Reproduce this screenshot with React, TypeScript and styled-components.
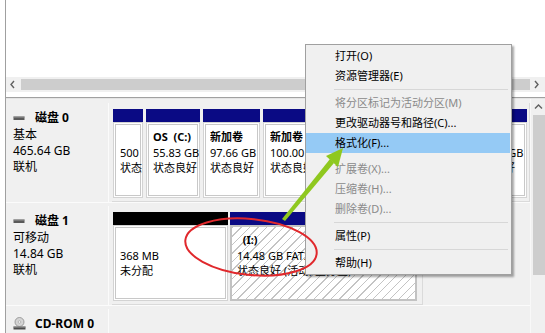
import styled, { createGlobalStyle } from "styled-components"

const GlobalStyle = createGlobalStyle`
  html, body {
    margin: 0;
    padding: 0;
    background: #fff;
  }
  body {
    font-family: "Noto Sans", "Noto Sans CJK SC", sans-serif;
    color: #000;
  }
`

const Page = styled.div`
  position: relative;
  width: 545px;
  height: 333px;
  overflow: hidden;
  padding-left: 5px;
  box-sizing: border-box;
  background: #fff;
`

const Frame = styled.div`
  height: 100%;
  border-left: 1px solid #a0a0a0;
  display: flex;
  flex-direction: column;
`

const TopPane = styled.div`
  height: 77px;
  flex-shrink: 0;
  background: #fff;
`

const HScroll = styled.div`
  height: 15px;
  flex-shrink: 0;
  display: flex;
  align-items: center;
  background: #f0f0f0;
`

const ArrowBtn = styled.div`
  width: 15px;
  height: 15px;
  flex-shrink: 0;
  display: flex;
  align-items: center;
  justify-content: center;
`

const HTrack = styled.div`
  flex: 1;
  height: 11px;
  background: #cdcdcd;
`

const Spacer = styled.div`
  height: 5px;
  flex-shrink: 0;
  background: #fff;
`

const Splitter = styled.div`
  height: 1px;
  flex-shrink: 0;
  background: #a0a0a0;
  border-bottom: 1px solid #e4e4e4;
`

const LowerPane = styled.div`
  flex: 1;
  min-height: 0;
  display: flex;
  background: #f0f0f0;
`

const DiskList = styled.div`
  flex: 1;
  padding-top: 4px;
  display: flex;
  flex-direction: column;
  gap: 3px;
`

const Row = styled.div`
  height: 100px;
  flex-shrink: 0;
  display: flex;
  border-bottom: 1px solid #fbfbfb;
  box-sizing: border-box;
`

const LabelCell = styled.div`
  width: 103px;
  flex-shrink: 0;
  box-sizing: border-box;
  border-right: 1px solid #fbfbfb;
  padding: 6px 0 0 7px;
  font-size: 12px;
  line-height: 16px;
`

const LabelTitle = styled.div`
  height: 18px;
  display: flex;
  align-items: center;
  font-weight: 700;
`

const IconBox = styled.span`
  width: 22px;
  display: flex;
  align-items: center;
`

const Strip = styled.div<{ $w: number; $gap: number }>`
  width: ${(p) => p.$w}px;
  margin-left: 3px;
  box-sizing: border-box;
  padding: 6px 2px 3px 1px;
  display: flex;
  gap: ${(p) => p.$gap}px;
  border-right: 1px solid #dadada;
  border-bottom: 1px solid #dadada;
`

const Partition = styled.div<{ $w?: number }>`
  ${(p) => (p.$w ? `width: ${p.$w}px; flex-shrink: 0;` : "flex: 1; min-width: 0;")}
  display: flex;
  flex-direction: column;
`

const Bar = styled.div<{ $color: string }>`
  height: 13px;
  flex-shrink: 0;
  background: ${(p) => p.$color};
`

const Body = styled.div<{ $hatch?: boolean }>`
  flex: 1;
  overflow: hidden;
  white-space: nowrap;
  box-sizing: border-box;
  padding: 6px 0 0 6px;
  font-size: 11px;
  line-height: 15.5px;
  ${(p) =>
    p.$hatch
      ? `
    background: repeating-linear-gradient(-45deg, #ffffff 0 5px, #c4c4c4 5px 6px);
    border: 2px solid #c2c2c2;
    padding: 5px 0 0 5px;
  `
      : `
    background: #fff;
    border: 1px solid #d3d3d3;
    box-shadow: inset 0 0 0 1px #fff, inset 0 0 0 2px #c8c8c8;
  `}
`

const Line = styled.div`
  overflow: hidden;
  text-overflow: clip;
`

const PartName = styled(Line)`
  font-weight: 700;
`

const VScroll = styled.div`
  width: 14px;
  flex-shrink: 0;
  display: flex;
  flex-direction: column;
  background: #f0f0f0;
  border-left: 1px solid #f8f8f8;
`

const VArrow = styled.div`
  height: 16px;
  display: flex;
  align-items: center;
  justify-content: center;
`

const VThumb = styled.div`
  height: 160px;
  width: 12px;
  margin-left: 2px;
  background: #cdcdcd;
`

const Menu = styled.div`
  position: absolute;
  left: 305px;
  top: 44px;
  width: 207px;
  box-sizing: border-box;
  padding: 1px 0;
  background: #f0f0f0;
  border: 1px solid #a0a0a0;
  box-shadow: 2px 2px 2px rgba(0, 0, 0, 0.35);
  font-size: 11px;
`

const MenuItem = styled.div<{ $disabled?: boolean; $active?: boolean; $gap?: number }>`
  height: 20px;
  line-height: 20px;
  padding-left: 29px;
  margin-right: 1px;
  margin-top: ${(p) => p.$gap ?? 0}px;
  white-space: nowrap;
  color: ${(p) => (p.$disabled ? "#8a8a8a" : "#000")};
  background: ${(p) => (p.$active ? "#95caf5" : "transparent")};
`

const Separator = styled.div`
  height: 7px;
  margin: 0 3px 0 28px;
  display: flex;
  align-items: center;

  &::after {
    content: "";
    flex: 1;
    height: 1px;
    background: #d7d7d7;
  }
`

const Overlay = styled.svg`
  position: absolute;
  left: 0;
  top: 0;
  pointer-events: none;
`

function Chevron({ dir }: { dir: "left" | "right" | "up" }) {
  const pts = dir === "left" ? "5,1 2,4.5 5,8" : dir === "right" ? "2,1 5,4.5 2,8" : "1,5.5 4.5,2 8,5.5"
  return (
    <svg width="9" height="9" viewBox="0 0 9 9">
      <polyline points={pts} fill="none" stroke="#606060" strokeWidth="1.4" />
    </svg>
  )
}

function DiskIcon() {
  return (
    <svg width="12" height="8" viewBox="0 0 12 8">
      <rect x="0.5" y="2.5" width="11" height="3.5" fill="#5a5a5a" />
      <rect x="0.5" y="2.5" width="11" height="1" fill="#9a9a9a" />
    </svg>
  )
}

function CdIcon() {
  return (
    <svg width="13" height="14" viewBox="0 0 13 14">
      <circle cx="6.5" cy="5" r="4.5" fill="#d4d4d4" stroke="#8c8c8c" strokeWidth="0.8" />
      <circle cx="6.5" cy="5" r="1.3" fill="#f4f4f4" stroke="#9a9a9a" strokeWidth="0.6" />
      <rect x="0.5" y="9.5" width="12" height="3" fill="#4c4c4c" />
      <rect x="0.5" y="9.5" width="12" height="1" fill="#9c9c9c" />
    </svg>
  )
}

type Part = {
  w?: number
  color: string
  hatch?: boolean
  lines: string[]
  bold?: boolean
}

type Disk = {
  title: string
  icon: "disk" | "cd"
  info: string[]
  stripW?: number
  gap?: number
  parts?: Part[]
}

const NAVY = "#0a0a84"

const disks: Disk[] = [
  {
    title: "磁盘 0",
    icon: "disk",
    info: ["基本", "465.64 GB", "联机"],
    stripW: 418,
    gap: 3,
    parts: [
      { w: 30, color: NAVY, lines: ["\u00a0", "500 MB", "状态良好"] },
      { w: 54, color: NAVY, bold: true, lines: ["OS\u00a0\u00a0(C:)", "55.83 GB", "状态良好"] },
      { w: 57, color: NAVY, bold: true, lines: ["新加卷", "97.66 GB", "状态良好"] },
      { w: 198, color: NAVY, bold: true, lines: ["新加卷", "100.00 GB NTFS", "状态良好 (基本数据分区)"] },
      { color: NAVY, bold: true, lines: ["新加卷", "212.15 GB", "状态良好"] },
    ],
  },
  {
    title: "磁盘 1",
    icon: "disk",
    info: ["可移动", "14.84 GB", "联机"],
    stripW: 311,
    gap: 2,
    parts: [
      { w: 115, color: "#000", lines: ["\u00a0", "368 MB", "未分配"] },
      { w: 187, color: NAVY, hatch: true, bold: true, lines: ["\u00a0\u00a0(I:)", "14.48 GB FAT32", "状态良好 (活动, 主分区)"] },
    ],
  },
  {
    title: "CD-ROM 0",
    icon: "cd",
    info: [],
  },
]

function DiskRow({ disk }: { disk: Disk }) {
  return (
    <Row>
      <LabelCell>
        <LabelTitle>
          <IconBox>{disk.icon === "cd" ? <CdIcon /> : <DiskIcon />}</IconBox>
          {disk.title}
        </LabelTitle>
        {disk.info.map((t) => (
          <div key={t}>{t}</div>
        ))}
      </LabelCell>
      {disk.parts && (
        <Strip $w={disk.stripW!} $gap={disk.gap!}>
          {disk.parts.map((p, i) => (
            <Partition key={i} $w={p.w}>
              <Bar $color={p.color} />
              <Body $hatch={p.hatch}>
                {p.lines.map((l, j) =>
                  j === 0 && p.bold ? <PartName key={j}>{l}</PartName> : <Line key={j}>{l}</Line>
                )}
              </Body>
            </Partition>
          ))}
        </Strip>
      )}
    </Row>
  )
}

type Item = { label?: string; disabled?: boolean; active?: boolean; gap?: number; sep?: boolean }

const menuItems: Item[] = [
  { label: "打开(O)" },
  { label: "资源管理器(E)" },
  { sep: true },
  { label: "将分区标记为活动分区(M)", disabled: true },
  { label: "更改驱动器号和路径(C)..." },
  { label: "格式化(F)...", active: true },
  { label: "扩展卷(X)...", disabled: true, gap: 6 },
  { label: "压缩卷(H)...", disabled: true },
  { label: "删除卷(D)...", disabled: true },
  { sep: true },
  { label: "属性(P)" },
  { sep: true },
  { label: "帮助(H)" },
]

export default function App() {
  return (
    <>
      <GlobalStyle />
      <Page>
        <Frame>
          <TopPane />
          <HScroll>
            <ArrowBtn>
              <Chevron dir="left" />
            </ArrowBtn>
            <HTrack />
            <ArrowBtn>
              <Chevron dir="right" />
            </ArrowBtn>
          </HScroll>
          <Spacer />
          <Splitter />
          <LowerPane>
            <DiskList>
              {disks.map((d) => (
                <DiskRow key={d.title} disk={d} />
              ))}
            </DiskList>
            <VScroll>
              <VArrow>
                <Chevron dir="up" />
              </VArrow>
              <VThumb />
            </VScroll>
          </LowerPane>
        </Frame>

        <Menu>
          {menuItems.map((it, i) =>
            it.sep ? (
              <Separator key={i} />
            ) : (
              <MenuItem key={i} $disabled={it.disabled} $active={it.active} $gap={it.gap}>
                {it.label}
              </MenuItem>
            )
          )}
        </Menu>

        <Overlay width="545" height="333" viewBox="0 0 545 333">
          <ellipse
            cx="251"
            cy="247"
            rx="66"
            ry="28"
            fill="none"
            stroke="#e0282c"
            strokeWidth="2"
            transform="rotate(6 251 247)"
          />
          <polygon points="282,219 285,221 334,163 330,159" fill="#8fc81f" />
          <polygon points="343,148 326,156 338,167" fill="#8fc81f" />
        </Overlay>
      </Page>
    </>
  )
}
